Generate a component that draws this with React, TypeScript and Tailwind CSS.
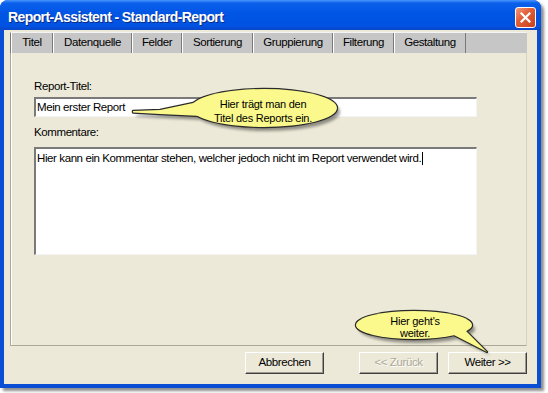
const tabs = [
  { label: "Titel", w: "w-[42px]" },
  { label: "Datenquelle", w: "w-[79px]" },
  { label: "Felder", w: "w-[50px]" },
  { label: "Sortierung", w: "w-[71px]" },
  { label: "Gruppierung", w: "w-[80px]" },
  { label: "Filterung", w: "w-[61px]" },
  { label: "Gestaltung", w: "w-[72px]" },
];

function CloseButton() {
  return (
    <div className="w-[21px] h-[21px] rounded-[3px] border border-white bg-[linear-gradient(135deg,#f09a7c_0%,#e2603a_40%,#c8401c_100%)] flex items-center justify-center">
      <svg width="11" height="11" viewBox="0 0 11 11">
        <path d="M1.5 1.5 L9.5 9.5 M9.5 1.5 L1.5 9.5" stroke="white" strokeWidth="2.2" strokeLinecap="square" />
      </svg>
    </div>
  );
}

function Button({ label, disabled }: { label: string; disabled?: boolean }) {
  return (
    <div className="w-[79px] h-[22px] bg-[#ECE9D8] border-t border-l border-t-white border-l-white border-b border-r border-b-[#404040] border-r-[#404040] shadow-[inset_-1px_-1px_0_#9c9a8f] flex items-center justify-center">
      <span
        className={
          disabled
            ? "text-[#aca899] [text-shadow:1px_1px_0_#ffffff]"
            : "text-black"
        }
      >
        {label}
      </span>
    </div>
  );
}

function Callouts() {
  return (
    <svg className="absolute inset-0 pointer-events-none" width="548" height="393" viewBox="0 0 548 393">
      <defs>
        <filter id="soft" x="-20%" y="-50%" width="140%" height="200%">
          <feGaussianBlur stdDeviation="1.6" />
        </filter>
      </defs>
      {/* shadows */}
      <g fill="#000" opacity="0.4" filter="url(#soft)">
        <ellipse cx="267" cy="112" rx="73" ry="19" />
        <path d="M136 115 L163 114 L201 106 L205 120 L163 118 L136 116.5 Z" />
        <ellipse cx="417" cy="329" rx="58" ry="14" />
        <path d="M453 337 L490 355 L467 332 Z" />
      </g>
      {/* outlines */}
      <g fill="#2a2a2a" stroke="#2a2a2a" strokeWidth="2.4" strokeLinejoin="round">
        <ellipse cx="264" cy="108" rx="73" ry="19" />
        <path d="M133 111 L160 110 L198 102 L202 116 L160 114 L133 112.5 Z" />
        <ellipse cx="414" cy="325" rx="58" ry="14" />
        <path d="M450 333 L487 352 L464 329 Z" />
      </g>
      {/* fills */}
      <g fill="#fbf88c">
        <ellipse cx="264" cy="108" rx="73" ry="19" />
        <path d="M133 111 L160 110 L198 102 L202 116 L160 114 L133 112.5 Z" />
        <ellipse cx="414" cy="325" rx="58" ry="14" />
        <path d="M450 333 L487 352 L464 329 Z" />
      </g>
    </svg>
  );
}

export default function App() {
  return (
    <div className="w-[548px] h-[393px] bg-white relative overflow-hidden font-['Liberation_Sans',Arial,sans-serif] text-[11.5px] tracking-[-0.4px] text-black">
      <div className="w-[541px] h-[388px] rounded-t-[8px] bg-[#0a4ed6] flex flex-col shadow-[3px_3px_3px_rgba(0,0,0,0.45)]">
        {/* title bar */}
        <div className="h-[30px] rounded-t-[8px] bg-[linear-gradient(to_bottom,#4a97ff_0%,#0b60ea_10%,#0055e5_45%,#0052e2_85%,#0846c9_100%)] flex items-start justify-between pl-[8px] pr-[5px] pt-[7px]">
          <span className="text-white font-bold text-[14px] tracking-[-0.6px] leading-[18px] mt-[1px] [text-shadow:1px_1px_0_#0a2a80]">
            Report-Assistent - Standard-Report
          </span>
          <CloseButton />
        </div>

        {/* client area */}
        <div className="flex-1 mx-[4px] mb-[4px] bg-[#ECE9D8] flex flex-col pt-[2px] pl-[6px] pr-[10px]">
          {/* tab strip */}
          <div className="h-[21px] bg-[#c6c6c6] border-t border-t-[#f4f4f4] border-l border-l-[#7a7a7a] flex">
            {tabs.map((t) => (
              <div
                key={t.label}
                className={`${t.w} h-full border-l border-l-white border-r border-r-[#7a7a7a] flex items-center justify-center`}
              >
                {t.label}
              </div>
            ))}
          </div>

          {/* panel */}
          <div className="h-[293px] border-l border-l-[#aca899] border-r border-r-[#d6d3c6] border-b border-b-[#aca899] shadow-[inset_1px_0_0_#ffffff] flex flex-col pl-[23px] pt-[26px]">
            <div className="leading-[15px]">Report-Titel:</div>
            <div className="mt-[3px] w-[443px] h-[20px] bg-white border-t-2 border-l-2 border-t-[#7a7a7a] border-l-[#7a7a7a] border-b border-r border-b-[#f4f4f4] border-r-[#f4f4f4] leading-[16px] pl-[1px]">
              Mein erster Report
            </div>
            <div className="mt-[8px] leading-[15px]">Kommentare:</div>
            <div className="mt-[7px] w-[443px] h-[108px] bg-white border-t-2 border-l-2 border-t-[#7a7a7a] border-l-[#7a7a7a] border-b border-r border-b-[#f4f4f4] border-r-[#f4f4f4] leading-[16px] pl-[1px] pt-[1px]">
              Hier kann ein Kommentar stehen, welcher jedoch nicht im Report verwendet wird.
              <span className="inline-block w-[1px] h-[13px] bg-black align-middle ml-[1px]"></span>
            </div>
          </div>

          {/* buttons */}
          <div className="mt-[6px] flex justify-end">
            <Button label="Abbrechen" />
            <div className="ml-[35px]">
              <Button label="<< Zurück" disabled />
            </div>
            <div className="ml-[10px]">
              <Button label="Weiter >>" />
            </div>
          </div>
        </div>
      </div>

      <Callouts />
      <div className="absolute left-[188px] top-[97px] w-[150px] text-center text-[11px] tracking-[-0.25px] leading-[14px]">
        Hier trägt man den
        <br />
        Titel des Reports ein.
      </div>
      <div className="absolute left-[356px] top-[315px] w-[118px] text-center text-[11px] tracking-[-0.25px] leading-[12px]">
        Hier geht's
        <br />
        weiter.
      </div>
    </div>
  );
}
